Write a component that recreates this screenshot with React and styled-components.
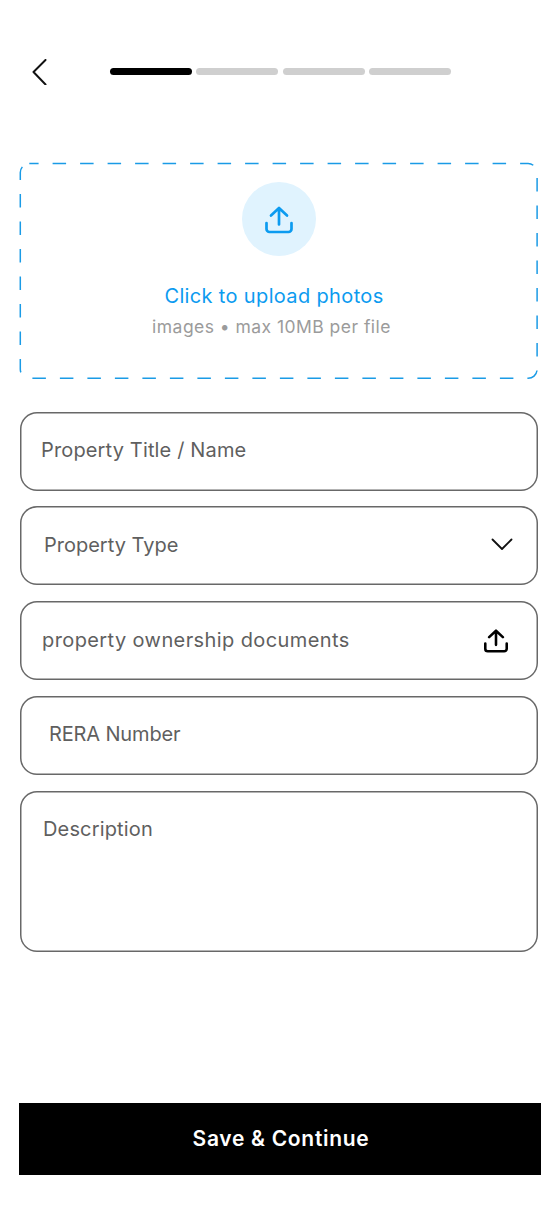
import React from "react";
import styled, { createGlobalStyle } from "styled-components";

const Global = createGlobalStyle`
  html, body { margin: 0; padding: 0; background: #fff; }
  body { font-family: Inter, "Open Sans", "Liberation Sans", sans-serif; }
`;

const Page = styled.div`
  width: 560px;
  height: 1218px;
  box-sizing: border-box;
  padding: 59px 20px 0 20px;
  display: flex;
  flex-direction: column;
  overflow: hidden;
`;

const Header = styled.header`
  display: flex;
  align-items: center;
  height: 26px;
  padding-left: 12px;
`;

const BackButton = styled.button`
  border: 0;
  background: none;
  padding: 0;
  width: 15px;
  height: 26px;
  display: block;
  cursor: pointer;
`;

const Progress = styled.div`
  display: flex;
  gap: 4.3px;
  margin-left: 63px;
  margin-top: -1px;
`;

const Step = styled.span`
  display: block;
  width: 82px;
  height: 7px;
  border-radius: 4px;
  background: ${(p) => (p.$active ? "#000" : "#cfcfcf")};
`;

const Dropzone = styled.div`
  position: relative;
  margin-top: 79px;
  width: 518px;
  height: 215px;
  box-sizing: border-box;
  display: flex;
  flex-direction: column;
  align-items: center;
  padding-top: 18px;
`;

const DashedOutline = styled.svg`
  position: absolute;
  inset: 0;
  width: 100%;
  height: 100%;
  overflow: visible;
`;

const UploadCircle = styled.div`
  width: 74px;
  height: 74px;
  border-radius: 50%;
  background: #e0f3fe;
  display: flex;
  align-items: center;
  justify-content: center;
  padding-top: 1px;
  box-sizing: border-box;
`;

const UploadTitle = styled.div`
  margin-top: 27px;
  margin-left: -10px;
  font-size: 20px;
  line-height: 26px;
  letter-spacing: 0.35px;
  color: #0c9bf0;
`;

const UploadHint = styled.div`
  margin-top: 6px;
  margin-left: -15px;
  font-size: 17.5px;
  line-height: 24px;
  letter-spacing: 0.46px;
  color: #9b9b9b;
`;

const Fields = styled.div`
  margin-top: 32.5px;
  display: flex;
  flex-direction: column;
  gap: 15.75px;
`;

const Field = styled.div`
  width: 518px;
  height: ${(p) => (p.$tall ? "161px" : "79px")};
  box-sizing: border-box;
  box-shadow: inset 0 0 0 1.5px #686868;
  border-radius: 17px;
  display: flex;
  align-items: ${(p) => (p.$tall ? "flex-start" : "center")};
  justify-content: space-between;
  padding: ${(p) => (p.$tall ? "25px" : "0")} ${(p) => p.$right || 25}px ${(p) => (p.$tall ? "0" : "2px")} ${(p) => p.$left}px;
  font-size: 20px;
  line-height: 26px;
  letter-spacing: ${(p) => p.$spacing || 0}px;
  color: #5f5f5f;
`;

const SaveButton = styled.button`
  margin-top: 151px;
  margin-left: -1px;
  width: 522px;
  height: 72px;
  padding: 0 0 0 2px;
  border: 0;
  background: #000;
  color: #fff;
  font-family: inherit;
  font-size: 21px;
  font-weight: 600;
  letter-spacing: 0.7px;
  cursor: pointer;
`;

const FieldIcon = styled.svg`
  margin-top: ${(p) => p.$offset || 0}px;
  flex: none;
`;

const UploadIcon = ({ color, size, weight, offset }) => (
  <FieldIcon $offset={offset} width={size} height={size} viewBox="0 0 28 28" fill="none" stroke={color} strokeWidth={weight} strokeLinecap="round" strokeLinejoin="round">
    <path d="M14 18.5V2M6 9.5 14 2l8 7.5" />
    <path d="M1.5 17v6a3 3 0 0 0 3 3h19a3 3 0 0 0 3-3v-6" />
  </FieldIcon>
);

export default function App() {
  return (
    <Page>
      <Global />
      <Header>
        <BackButton aria-label="Back">
          <svg width="15" height="26" viewBox="0 0 15 26" fill="none" stroke="#111" strokeWidth="2" strokeLinecap="round" strokeLinejoin="round">
            <path d="M13.5 1 1.5 13l12 12.5" />
          </svg>
        </BackButton>
        <Progress>
          <Step $active />
          <Step />
          <Step />
          <Step />
        </Progress>
      </Header>
      <Dropzone>
        <DashedOutline viewBox="0 0 518 215" fill="none">
          <rect x="0.3" y="-0.4" width="516.8" height="214.7" rx="9" stroke="#1a9be6" strokeWidth="1.5" strokeDasharray="13.5 14" strokeDashoffset="4.2" />
        </DashedOutline>
        <UploadCircle>
          <UploadIcon color="#0c9bf0" size={28} weight={2.7} />
        </UploadCircle>
        <UploadTitle>Click to upload photos</UploadTitle>
        <UploadHint>images • max 10MB per file</UploadHint>
      </Dropzone>
      <Fields>
        <Field $left={21} $spacing={0.15}>Property Title / Name</Field>
        <Field $left={24}>
          Property Type
          <svg width="22" height="13" viewBox="0 0 22 13" fill="none" stroke="#111" strokeWidth="1.8" strokeLinecap="round" strokeLinejoin="round">
            <path d="M1.5 1.5 11 11l9.5-9.5" />
          </svg>
        </Field>
        <Field $left={22} $right={30} $spacing={0.4}>
          property ownership documents
          <UploadIcon color="#000" size={24} weight={3} offset={2} />
        </Field>
        <Field $left={29} $spacing={-0.15}>RERA Number</Field>
        <Field $tall $left={23} $spacing={0.15}>Description</Field>
      </Fields>
      <SaveButton>Save &amp; Continue</SaveButton>
    </Page>
  );
}
